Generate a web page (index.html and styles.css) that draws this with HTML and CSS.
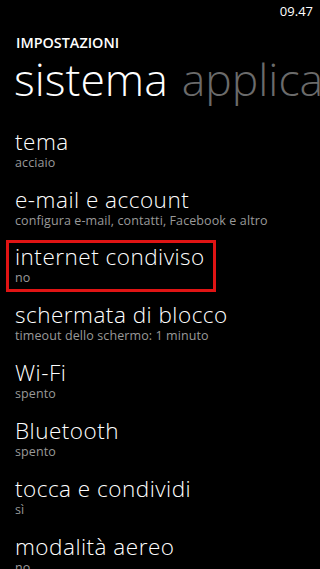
FILE: index.html
```html
<!DOCTYPE html>
<html lang="it">
<head>
<meta charset="utf-8">
<title>Impostazioni</title>
<link rel="stylesheet" href="styles.css">
</head>
<body>
<div class="screen">
  <div class="status-bar"><span class="clock">09.47</span></div>
  <div class="app-title">IMPOSTAZIONI</div>
  <div class="pivot">
    <span class="pivot-item active">sistema</span>
    <span class="pivot-item">applicazioni</span>
  </div>
  <ul class="settings">
    <li class="setting"><div class="setting-title">tema</div><div class="setting-sub">acciaio</div></li>
    <li class="setting"><div class="setting-title">e-mail e account</div><div class="setting-sub">configura e-mail, contatti, Facebook e altro</div></li>
    <li class="setting highlighted"><div class="setting-title">internet condiviso</div><div class="setting-sub">no</div></li>
    <li class="setting"><div class="setting-title">schermata di blocco</div><div class="setting-sub">timeout dello schermo: 1 minuto</div></li>
    <li class="setting"><div class="setting-title">Wi-Fi</div><div class="setting-sub">spento</div></li>
    <li class="setting"><div class="setting-title">Bluetooth</div><div class="setting-sub">spento</div></li>
    <li class="setting"><div class="setting-title">tocca e condividi</div><div class="setting-sub">sì</div></li>
    <li class="setting"><div class="setting-title">modalità aereo</div><div class="setting-sub">no</div></li>
  </ul>
</div>
</body>
</html>
```
FILE: styles.css
```css
html, body {
  margin: 0;
  padding: 0;
  background: #000;
}
body {
  font-family: "Open Sans", "Noto Sans", "DejaVu Sans", sans-serif;
  color: #fff;
}
.screen {
  width: 320px;
  height: 569px;
  overflow: hidden;
  background: #000;
}
.status-bar {
  height: 22px;
  display: flex;
  justify-content: flex-end;
  padding-right: 7px;
}
.clock {
  font-size: 13px;
  line-height: 22px;
}
.app-title {
  margin: 10.5px 0 0 16px;
  font-size: 14.4px;
  line-height: 20px;
  font-weight: 600;
}
.pivot {
  margin: 1.2px 0 0 14px;
  display: flex;
  gap: 14px;
  white-space: nowrap;
  font-size: 44.5px;
  line-height: 50px;
  font-weight: 300;
}
.pivot-item {
  color: #6b6b6b;
}
.pivot-item.active {
  color: #fff;
}
.settings {
  list-style: none;
  margin: 25px 0 0;
  padding: 0 0 0 15px;
}
.setting {
  height: 57.86px;
  position: relative;
}
.setting-title {
  font-size: 22.5px;
  line-height: 26px;
  font-weight: 350;
  letter-spacing: 0.5px;
  white-space: nowrap;
}
.setting-sub {
  font-size: 12.5px;
  line-height: 16px;
  letter-spacing: 0.1px;
  color: #999;
  white-space: nowrap;
}
.highlighted::after {
  content: "";
  position: absolute;
  left: -9px;
  top: -4.5px;
  width: 210px;
  height: 52px;
  box-sizing: border-box;
  border: 3px solid #e01414;
}
```
